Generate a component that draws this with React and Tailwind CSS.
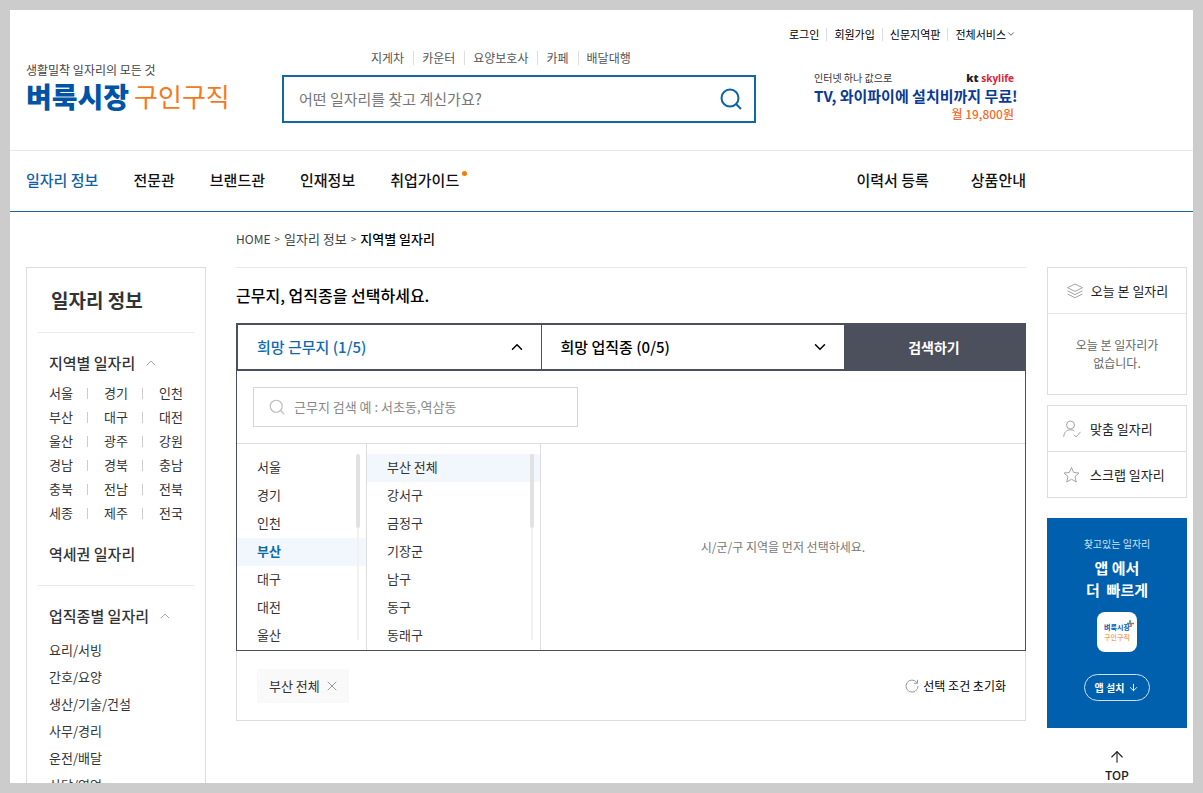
import { useState } from 'react'
import { ArrowDown, ArrowUp, ChevronDown, ChevronUp, Search, X } from 'lucide-react'

const utilityLinks = ['로그인', '회원가입', '신문지역판']
const keywords = ['지게차', '카운터', '요양보호사', '카페', '배달대행']
const mainMenu = ['일자리 정보', '전문관', '브랜드관', '인재정보', '취업가이드']
const subMenu = ['이력서 등록', '상품안내']

const areaLinks = [
  ['서울', '경기', '인천'],
  ['부산', '대구', '대전'],
  ['울산', '광주', '강원'],
  ['경남', '경북', '충남'],
  ['충북', '전남', '전북'],
  ['세종', '제주', '전국'],
]
const jobLinks = ['요리/서빙', '간호/요양', '생산/기술/건설', '사무/경리', '운전/배달', '상담/영업']

const regions = ['서울', '경기', '인천', '부산', '대구', '대전', '울산']
const districts = ['부산 전체', '강서구', '금정구', '기장군', '남구', '동구', '동래구']

function LayersIcon() {
  return (
    <svg width="18" height="16" viewBox="0 0 18 16" fill="none" stroke="#a3a3a3" aria-hidden="true">
      <path d="M9 1 16.5 4.7 9 8.4 1.5 4.7Z" />
      <path d="M1.5 7.9 9 11.6l7.5-3.7M1.5 11 9 14.7l7.5-3.7" />
    </svg>
  )
}

function UserCheckIcon() {
  return (
    <svg width="18" height="18" viewBox="0 0 18 18" fill="none" stroke="#a3a3a3" aria-hidden="true">
      <circle cx="7.5" cy="5" r="4" />
      <path d="M.8 17c0-4.6 2.7-7.2 6.7-7.2 1.5 0 2.8.4 3.9 1.100M11 14.800l2.200 2.200 4.300-5.200" />
    </svg>
  )
}

function StarIcon() {
  return (
    <svg width="18" height="18" viewBox="0 0 18 18" fill="none" stroke="#a3a3a3" strokeLinejoin="round" aria-hidden="true">
      <path d="m8.500 1.500 2.200 5 5.300.5-4 3.600 1.200 5.400-4.700-2.800L3.800 16 5 10.600 1 7l5.300-.5Z" />
    </svg>
  )
}

function ResetIcon() {
  return (
    <svg width="14" height="14" viewBox="0 0 14 14" fill="none" stroke="#999" aria-hidden="true">
      <path d="M11.800 3.500A6 6 0 1 0 13 7" />
      <path d="M12.500.8v3.500H9" />
    </svg>
  )
}

function Header() {
  return (
    <header className="flex h-[141px] items-start border-b border-[#e8e8e8] pl-4 pr-[167px]">
      <a href="#" className="block w-[256px] shrink-0 whitespace-nowrap pt-[52px]">
        <span className="block text-[12px] leading-4 text-[#444]">생활밀착 일자리의 모든 것</span>
        <span className="flex items-center gap-[5px] leading-9">
          <strong className="text-[28px] font-black text-[#0054a6]">벼룩시장</strong>
          <span className="text-[26px] text-[#f47920]">구인구직</span>
        </span>
      </a>

      <div className="mr-[33px] min-w-0 flex-1 pt-10">
        <ul className="flex divide-x divide-[#ddd] pl-[81px] text-[12px] text-[#555]">
          {keywords.map((word) => (
            <li key={word} className="my-px pl-2 pr-[9px] leading-[14px]">
              <a href="#">{word}</a>
            </li>
          ))}
        </ul>
        <form className="mt-[9px] flex h-12 items-center border-2 border-[#0f69a9] pl-[15px] pr-3" onSubmit={(e) => e.preventDefault()}>
          <input
            type="text"
            aria-label="일자리 검색"
            placeholder="어떤 일자리를 찾고 계신가요?"
            className="min-w-0 flex-1 text-[15px] outline-none placeholder:text-[#777]"
          />
          <button type="submit" aria-label="검색">
            <svg width="22" height="22" viewBox="0 0 22 22" fill="none" stroke="#0a62ab" strokeWidth="2" aria-hidden="true">
              <circle cx="10" cy="10" r="8.500" />
              <path d="m16 16 5 5" />
            </svg>
          </button>
        </form>
      </div>

      <div className="w-[237px] shrink-0 whitespace-nowrap pt-4">
        <ul className="flex text-[11px] leading-4 text-black">
          {utilityLinks.map((label) => (
            <li key={label} className="mr-[7px] flex items-center gap-[7px]">
              <a href="#">{label}</a>
              <span className="h-[13px] w-px bg-[#ddd]" />
            </li>
          ))}
          <li>
            <button type="button" className="flex items-center">
              전체서비스
              <ChevronDown size={10} className="text-[#444]" />
            </button>
          </li>
        </ul>
        <a href="#" className="ml-[25px] mr-3 mt-[27px] block leading-[18px]">
          <span className="flex items-center justify-between text-[10px] text-[#333]">
            인터넷 하나 값으로
            <span className="font-['Open_Sans',sans-serif] text-[10px] font-bold text-[#d7263d]">
              <b className="text-[11px] text-[#222]">kt</b> skylife
            </span>
          </span>
          <strong className="block text-[15px] leading-[18px] text-[#0a3a93]">TV, 와이파이에 설치비까지 무료!</strong>
          <span className="block text-right text-[12px] leading-[18px] font-medium text-[#f56a2a]">월 19,800원</span>
        </a>
      </div>
    </header>
  )
}

function MainNav() {
  return (
    <nav className="flex h-[61px] items-center justify-between whitespace-nowrap border-b border-[#17679b] pb-0.5 pl-4 pr-[167px] text-[15px] font-medium text-[#111]" aria-label="주 메뉴">
      <ul className="flex gap-[35px]">
        {mainMenu.map((label, index) => (
          <li key={label} className="relative">
            <a href="#" className={index === 0 ? 'text-[#0f62a8]' : ''}>{label}</a>
            {label === '취업가이드' && <span className="absolute -right-2 top-0.5 size-[5px] rounded-full bg-[#f57c00]" />}
          </li>
        ))}
      </ul>
      <ul className="flex gap-[42px]">
        {subMenu.map((label) => (
          <li key={label}>
            <a href="#">{label}</a>
          </li>
        ))}
      </ul>
    </nav>
  )
}

function Sidebar() {
  return (
    <aside className="mt-[55px] w-[180px] shrink-0 border border-[#ddd] text-[13px] text-[#333]">
      <h2 className="mx-[11px] flex h-[65px] items-center border-b border-[#ebebeb] pl-[13px] text-[19px] font-bold">일자리 정보</h2>

      <section className="mx-[11px] border-b border-[#ebebeb] pb-[19px] pl-[11px] pt-[18px]">
        <button type="button" className="flex h-6 items-center gap-2 text-[15px] font-medium">
          지역별 일자리
          <ChevronUp size={16} strokeWidth={1} className="text-[#777]" />
        </button>
        <ul className="mt-[6px]">
          {areaLinks.map((row) => (
            <li key={row[0]} className="flex h-6 items-center gap-3">
              {row.map((area, index) => (
                <span key={area} className="flex items-center gap-4">
                  {index > 0 && <span className="h-[11px] w-px bg-[#ccc]" />}
                  <a href="#" className="w-[26px]">{area}</a>
                </span>
              ))}
            </li>
          ))}
        </ul>
        <a href="#" className="mt-[17px] flex h-6 items-center text-[15px] font-medium">역세권 일자리</a>
      </section>

      <section className="mx-[11px] pl-[11px] pt-[18px]">
        <button type="button" className="flex h-6 items-center gap-2 text-[15px] font-medium">
          업직종별 일자리
          <ChevronUp size={16} strokeWidth={1} className="text-[#777]" />
        </button>
        <ul className="mt-2">
          {jobLinks.map((job) => (
            <li key={job} className="h-[27px] leading-[27px]">
              <a href="#">{job}</a>
            </li>
          ))}
        </ul>
      </section>
    </aside>
  )
}

function ScrollBar() {
  return (
    <span className="absolute bottom-[10px] right-[6px] top-[10px] flex w-1 justify-center" aria-hidden="true">
      <span className="h-full w-0.5 bg-[#f1f1f1]" />
      <span className="absolute left-0 top-0 h-[74px] w-1 rounded-sm bg-[#e2e2e2]" />
    </span>
  )
}

function OptionList({ items, value, filled, onChange }) {
  return (
    <div className={`relative border-r border-[#ddd] pt-[10px] ${filled ? 'w-[130px]' : 'w-[174px]'}`}>
      <ul>
        {items.map((item) => {
          const selected = item === value
          return (
            <li key={item}>
              <button
                type="button"
                onClick={() => onChange(item)}
                className={`block h-7 w-full pb-0.5 pl-5 text-left ${selected ? 'bg-[#f1f7fc]' : ''} ${selected && filled ? 'font-bold text-[#0f69a9]' : ''}`}
              >
                {item}
              </button>
            </li>
          )
        })}
      </ul>
      <ScrollBar />
    </div>
  )
}

function JobFinder() {
  const [region, setRegion] = useState('부산')
  const [district, setDistrict] = useState('부산 전체')

  return (
    <main className="min-w-0 flex-1">
      <nav className="flex h-[55px] items-center gap-1 pb-0.5 text-[12px] text-[#444]" aria-label="현재 위치">
        <a href="#">HOME</a>
        <span className="text-[10px]">&gt;</span>
        <a href="#" className="text-[13px]">일자리 정보</a>
        <span className="text-[10px]">&gt;</span>
        <strong className="text-[13px] font-medium text-black">지역별 일자리</strong>
      </nav>

      <h1 className="flex h-14 items-center border-t border-[#e8e8e8] pb-0.5 text-[16px] font-medium text-black">근무지, 업직종을 선택하세요.</h1>

      <div className="flex h-12 border-2 border-[#4c4f5c] bg-[#4c4f5c] text-[15px] font-medium">
        <button type="button" className="flex flex-1 items-center justify-between border-r border-[#4c4f5c] bg-white pl-[19px] pr-[15px] text-[#0f69b4]">
          희망 근무지 (1/5)
          <ChevronUp size={18} className="text-black" />
        </button>
        <button type="button" className="flex flex-1 items-center justify-between bg-white pl-[19px] pr-[15px] text-black">
          희망 업직종 (0/5)
          <ChevronDown size={18} />
        </button>
        <button type="button" className="w-[180px] text-[14px] font-bold text-white">검색하기</button>
      </div>

      <div className="border-x border-b border-[#4c4f5c] text-[13px] text-[#333]">
        <div className="border-b border-[#ddd] p-4">
          <label className="flex h-10 w-[325px] items-center gap-2 border border-[#d5d5d5] pl-[14px]">
            <Search size={18} strokeWidth={1.5} className="text-[#bbb]" />
            <input
              type="text"
              aria-label="근무지 검색"
              placeholder="근무지 검색 예 : 서초동,역삼동"
              className="min-w-0 flex-1 outline-none placeholder:text-[#888]"
            />
          </label>
        </div>
        <div className="flex">
          <OptionList items={regions} value={region} filled onChange={setRegion} />
          <OptionList items={districts} value={district} onChange={setDistrict} />
          <p className="flex flex-1 items-center justify-center text-[12px] text-[#777]">시/군/구 지역을 먼저 선택하세요.</p>
        </div>
      </div>

      <div className="flex h-[70px] items-center justify-between border-x border-b border-[#ddd] pl-5 pr-[19px]">
        <span className="flex h-[34px] items-center gap-1 bg-[#f9f9f9] pl-3 pr-[9px] text-[13px] text-[#333]">
          부산 전체
          <button type="button" aria-label="부산 전체 삭제">
            <X size={16} strokeWidth={1} className="text-[#666]" />
          </button>
        </span>
        <button type="button" className="flex items-center gap-1 text-[12px] text-black">
          <ResetIcon />
          선택 조건 초기화
        </button>
      </div>
    </main>
  )
}

function QuickMenu() {
  return (
    <aside className="mt-[55px] w-[140px] shrink-0 text-[13px] text-[#222]">
      <section className="border border-[#ddd]">
        <h2 className="flex h-[46px] items-center justify-center gap-[7px] border-b border-[#e8e8e8]">
          <LayersIcon />
          오늘 본 일자리
        </h2>
        <p className="flex h-20 items-center justify-center text-center text-[12px] leading-[18px] text-[#666]">
          오늘 본 일자리가
          <br />
          없습니다.
        </p>
      </section>

      <ul className="mt-[10px] divide-y divide-[#ddd] border border-[#ddd]">
        <li>
          <a href="#" className="flex h-[45px] items-center gap-[9px] pl-[15px]">
            <UserCheckIcon />
            맞춤 일자리
          </a>
        </li>
        <li>
          <a href="#" className="flex h-[45px] items-center gap-[9px] pl-[15px]">
            <StarIcon />
            스크랩 일자리
          </a>
        </li>
      </ul>

      <section className="mt-5 flex h-[210px] flex-col items-center bg-[#0060ae] pt-[18px] text-white">
        <p className="text-[10px] leading-4 text-[#cfe2f3]">찾고있는 일자리</p>
        <p className="mt-[5px] text-center text-[15px] leading-[22px] font-bold">
          앱 에서
          <br />
          더&nbsp; 빠르게
        </p>
        <div className="relative mt-[11px] flex size-10 flex-col items-center justify-center rounded-lg bg-white text-[7px] leading-[10px]">
          <b className="text-[#0060ae]">벼룩시장</b>
          <span className="text-[#f47920]">구인구직</span>
          <svg className="absolute right-[3px] top-[8px]" width="7" height="7" viewBox="0 0 7 7" strokeWidth="1.500" aria-hidden="true">
            <path d="M3 0v3.500H0" fill="none" stroke="#0aa5a0" />
            <path d="M4 7V3.500h3" fill="none" stroke="#e4572e" />
          </svg>
        </div>
        <button type="button" className="mt-[22px] flex h-[27px] w-[66px] items-center justify-center gap-1 rounded-full border border-[#cfe2f3] text-[10px] font-bold">
          앱 설치
          <ArrowDown size={11} />
        </button>
      </section>

      <a href="#" className="mt-5 flex flex-col items-center text-[12px] leading-[18px] font-medium">
        <ArrowUp size={18} strokeWidth={1.500} />
        TOP
      </a>
    </aside>
  )
}

export default function App() {
  return (
    <div className="h-screen bg-[#ccc] p-[10px] font-['Noto_Sans_CJK_KR',sans-serif]">
      <div className="h-full overflow-hidden bg-white">
        <Header />
        <MainNav />
        <div className="flex items-start pl-4 pr-[6px]">
          <Sidebar />
          <div className="ml-[30px] mr-[21px] flex min-w-0 flex-1">
            <JobFinder />
          </div>
          <QuickMenu />
        </div>
      </div>
    </div>
  )
}
